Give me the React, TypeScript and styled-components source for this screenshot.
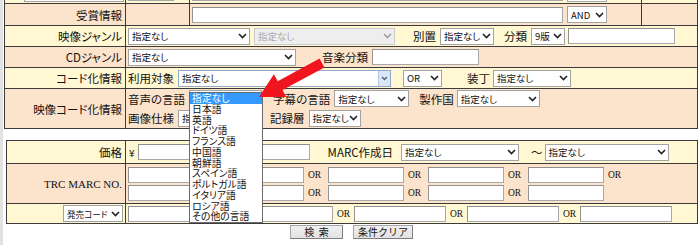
import React from "react";
import styled, { createGlobalStyle } from "styled-components";

const PEACH = "#fce3cc";
const YELLOW = "#fff8d3";
const LINE = "#3b3b3b";

const GlobalStyle = createGlobalStyle`
  html, body {
    margin: 0;
    padding: 0;
    background: #ffffff;
  }
  body {
    font-family: "Noto Sans CJK JP", "Noto Sans", sans-serif;
    font-size: 11.5px;
    color: #111;
    font-feature-settings: "palt";
  }
`;

const Page = styled.div`
  position: relative;
  width: 700px;
  height: 245px;
  overflow: hidden;
  box-sizing: border-box;
  border-left: 3px solid #e2e2e2;
`;

// the form is scrolled a little, so the row above 受賞情報 is cut off
const Sheet = styled.div`
  margin-top: -18px;
`;

const Table = styled.div<{ $indent: number; $gap?: number }>`
  margin: ${(p) => p.$gap ?? 0}px 2px 0 ${(p) => p.$indent}px;
  border: 1px solid ${LINE};
`;

const Row = styled.div<{ $bg: string; $h: number }>`
  display: flex;
  height: ${(p) => p.$h}px;
  background: ${(p) => p.$bg};
  & + & {
    border-top: 1px solid ${LINE};
  }
`;

const Label = styled.div<{ $w: number; $serif?: boolean; $pad?: number }>`
  flex: none;
  width: ${(p) => p.$w}px;
  box-sizing: border-box;
  border-right: 1px solid ${LINE};
  display: flex;
  align-items: center;
  justify-content: flex-end;
  padding-right: ${(p) => p.$pad ?? 3}px;
  white-space: nowrap;
  font-family: ${(p) => (p.$serif ? '"Liberation Serif", serif' : "inherit")};
  font-size: ${(p) => (p.$serif ? "11px" : "inherit")};
`;

const Cell = styled.div<{ $w?: number; $divider?: boolean; $stack?: boolean }>`
  ${(p) => (p.$w ? `flex: none; width: ${p.$w}px;` : "flex: 1;")}
  box-sizing: border-box;
  border-right: ${(p) => (p.$divider ? `1px solid ${LINE}` : "none")};
  display: flex;
  flex-direction: ${(p) => (p.$stack ? "column" : "row")};
  justify-content: ${(p) => (p.$stack ? "center" : "flex-start")};
  align-items: ${(p) => (p.$stack ? "stretch" : "center")};
  padding-left: 2px;
`;

const Line = styled.div<{ $h: number }>`
  display: flex;
  align-items: center;
  height: ${(p) => p.$h}px;
`;

const Caption = styled.span<{ $ml?: number }>`
  flex: none;
  margin-left: ${(p) => p.$ml ?? 0}px;
  white-space: nowrap;
`;

const SelectBox = styled.div<{
  $w: number;
  $ml?: number;
  $fs: number;
  $disabled?: boolean;
  $focus?: boolean;
}>`
  position: relative;
  flex: none;
  width: ${(p) => p.$w}px;
  height: 17px;
  margin-left: ${(p) => p.$ml ?? 0}px;
  box-sizing: border-box;
  border: 1px solid ${(p) => (p.$disabled ? "#cacaca" : p.$focus ? "#93a9c9" : "#a3a3a3")};
  background: ${(p) => (p.$disabled ? "#eeeeee" : "#ffffff")};
  color: ${(p) => (p.$disabled ? "#a9a9a9" : "#111")};
  display: flex;
  align-items: center;
  padding-left: 3px;
  font-size: ${(p) => p.$fs}px;
`;

const SelectValue = styled.span`
  flex: 1;
  min-width: 0;
  white-space: nowrap;
  line-height: 14px;
`;

const ArrowBox = styled.span<{ $focus?: boolean }>`
  flex: none;
  width: ${(p) => (p.$focus ? 11 : 13)}px;
  height: 100%;
  display: flex;
  align-items: center;
  justify-content: center;
  background: ${(p) => (p.$focus ? "#dce7f5" : "transparent")};
  border-left: ${(p) => (p.$focus ? "1px solid #b3c7e2" : "none")};
`;

const ListBox = styled.ul`
  position: absolute;
  left: -1px;
  top: 1px;
  z-index: 3;
  width: 74px;
  margin: 0;
  padding: 0;
  list-style: none;
  box-sizing: border-box;
  background: #ffffff;
  border: 1px solid #6b6b6b;
`;

const ListItem = styled.li<{ $selected?: boolean }>`
  height: 10.75px;
  line-height: 10.75px;
  padding-left: 2px;
  font-size: 9.8px;
  white-space: nowrap;
  background: ${(p) => (p.$selected ? "#3399ff" : "transparent")};
  color: ${(p) => (p.$selected ? "#ffffff" : "#111")};
`;

const TextBox = styled.input<{ $w: number; $ml?: number }>`
  flex: none;
  width: ${(p) => p.$w}px;
  height: 16px;
  margin: 0 0 0 ${(p) => p.$ml ?? 0}px;
  padding: 0;
  box-sizing: border-box;
  border: 1px solid #a8a8a8;
  border-top-color: #8e8e8e;
  border-left-color: #949494;
  background: #ffffff;
  outline: none;
`;

const Or = styled.span<{ $w: number; $pl: number }>`
  flex: none;
  width: ${(p) => p.$w}px;
  padding-left: ${(p) => p.$pl}px;
  box-sizing: border-box;
  font-family: "Liberation Serif", serif;
  font-size: 9.5px;
`;

const Yen = styled.span`
  flex: none;
  margin-left: 1px;
  font-size: 10px;
`;

const Actions = styled.div`
  display: flex;
  justify-content: center;
  gap: 10px;
  margin-top: 1px;
`;

const Button = styled.button<{ $w: number }>`
  width: ${(p) => p.$w}px;
  height: 14px;
  padding: 0;
  font-family: inherit;
  font-size: 10px;
  line-height: 12px;
  color: #111;
  background: linear-gradient(#f0f0f0, #e2e2e2);
  border: 1px solid #a5a5a5;
  border-right-color: #7d7d7d;
  border-bottom-color: #7d7d7d;
`;

const Overlay = styled.svg`
  position: absolute;
  left: -3px;
  top: 0;
  z-index: 4;
  pointer-events: none;
`;

function Chevron({ color = "#222", small = false }: { color?: string; small?: boolean }) {
  return small ? (
    <svg width="7" height="5" viewBox="0 0 7 5">
      <path d="M1 1l2.5 2.5L6 1" fill="none" stroke={color} strokeWidth="1.4" />
    </svg>
  ) : (
    <svg width="9" height="6" viewBox="0 0 9 6">
      <path d="M1 1l3.5 3.5L8 1" fill="none" stroke={color} strokeWidth="1.6" />
    </svg>
  );
}

type SelectProps = {
  w: number;
  ml?: number;
  fs?: number;
  value?: string;
  disabled?: boolean;
  focus?: boolean;
  children?: React.ReactNode;
};

function Select({ w, ml, fs = 9.5, value = "指定なし", disabled, focus, children }: SelectProps) {
  return (
    <SelectBox $w={w} $ml={ml} $fs={fs} $disabled={disabled} $focus={focus}>
      <SelectValue>{value}</SelectValue>
      <ArrowBox $focus={focus}>
        <Chevron color={disabled ? "#a0a0a0" : focus ? "#4d5f80" : "#222"} small={focus} />
      </ArrowBox>
      {children}
    </SelectBox>
  );
}

const languages = [
  "指定なし",
  "日本語",
  "英語",
  "ドイツ語",
  "フランス語",
  "中国語",
  "朝鮮語",
  "スペイン語",
  "ポルトガル語",
  "イタリア語",
  "ロシア語",
  "その他の言語",
];

function OrInputs({ w, step, count, trailing }: { w: number; step: number; count: number; trailing: boolean }) {
  return (
    <>
      {Array.from({ length: count }).map((_, i) => (
        <React.Fragment key={i}>
          <TextBox $w={w} />
          {(i < count - 1 || trailing) && (
            <Or $w={step - w} $pl={4}>
              OR
            </Or>
          )}
        </React.Fragment>
      ))}
    </>
  );
}

export default function App() {
  return (
    <Page>
      <GlobalStyle />
      <Sheet>
        <Table $indent={1}>
          <Row $bg={YELLOW} $h={20}>
            <Label $w={121} $pad={1}>
              <Select w={100} value="" />
            </Label>
            <Cell $w={64} $divider>
              <TextBox $w={46} />
            </Cell>
            <Cell $w={452} $divider>
              <TextBox $w={371} />
              <Select w={40} ml={4} value="" />
            </Cell>
            <Cell />
          </Row>
          <Row $bg={PEACH} $h={21}>
            <Label $w={121}>受賞情報</Label>
            <Cell $w={64} $divider />
            <Cell $w={452} $divider>
              <TextBox $w={371} />
              <Select w={40} ml={4} value="AND" />
            </Cell>
            <Cell />
          </Row>
          <Row $bg={YELLOW} $h={20}>
            <Label $w={121}>映像ジャンル</Label>
            <Cell>
              <Select w={122} />
              <Select w={141} ml={4} disabled />
              <Caption $ml={18}>別置</Caption>
              <Select w={54} ml={4} />
              <Caption $ml={10}>分類</Caption>
              <Select w={34} ml={4} value="9版" />
              <TextBox $w={107} $ml={3} />
            </Cell>
          </Row>
          <Row $bg={PEACH} $h={20}>
            <Label $w={121}>CDジャンル</Label>
            <Cell>
              <Select w={168} />
              <Caption $ml={26}>音楽分類</Caption>
              <TextBox $w={107} $ml={4} />
            </Cell>
          </Row>
          <Row $bg={YELLOW} $h={20}>
            <Label $w={121}>コード化情報</Label>
            <Cell>
              <Caption>利用対象</Caption>
              <Select w={213} ml={4} focus />
              <Select w={39} ml={12} value="OR" />
              <Caption $ml={25}>装丁</Caption>
              <Select w={78} ml={3} />
            </Cell>
          </Row>
          <Row $bg={PEACH} $h={39}>
            <Label $w={121}>映像コード化情報</Label>
            <Cell $stack>
              <Line $h={19}>
                <Caption>音声の言語</Caption>
                <Select w={73} ml={4}>
                  <ListBox>
                    {languages.map((lang, i) => (
                      <ListItem key={lang} $selected={i === 0}>
                        {lang}
                      </ListItem>
                    ))}
                  </ListBox>
                </Select>
                <Caption $ml={11}>字幕の言語</Caption>
                <Select w={75} ml={4} />
                <Caption $ml={10}>製作国</Caption>
                <Select w={83} ml={3} />
              </Line>
              <Line $h={20}>
                <Caption>画像仕様</Caption>
                <Select w={80} ml={4} />
                <Caption $ml={12}>記録層</Caption>
                <Select w={52} ml={4} />
              </Line>
            </Cell>
          </Row>
        </Table>

        <Table $indent={3} $gap={11}>
          <Row $bg={YELLOW} $h={22}>
            <Label $w={119}>価格</Label>
            <Cell>
              <Yen>¥</Yen>
              <TextBox $w={172} $ml={3} />
              <Caption $ml={18}>MARC作成日</Caption>
              <Select w={118} ml={8} />
              <Caption $ml={12}>〜</Caption>
              <Select w={124} ml={2} />
            </Cell>
          </Row>
          <Row $bg={PEACH} $h={39}>
            <Label $w={119} $serif>
              TRC MARC NO.
            </Label>
            <Cell $stack>
              <Line $h={18}>
                <OrInputs w={76} step={100} count={5} trailing />
              </Line>
              <Line $h={18}>
                <OrInputs w={76} step={100} count={5} trailing={false} />
              </Line>
            </Cell>
          </Row>
          <Row $bg={YELLOW} $h={19}>
            <Label $w={119} $pad={2}>
              <Select w={60} fs={8.6} value="発売コード" />
            </Label>
            <Cell>
              <OrInputs w={92} step={113} count={5} trailing={false} />
            </Cell>
          </Row>
        </Table>

        <Actions>
          <Button $w={53}>検&nbsp;&nbsp;索</Button>
          <Button $w={60}>条件クリア</Button>
        </Actions>
      </Sheet>

      <Overlay width="700" height="245" viewBox="0 0 700 245">
        <polygon
          points="259,97 286.3,97 282.5,90 324.4,67.4 319.6,58.6 277.7,81.2 273.9,74.2"
          fill="#f0141e"
        />
      </Overlay>
    </Page>
  );
}
